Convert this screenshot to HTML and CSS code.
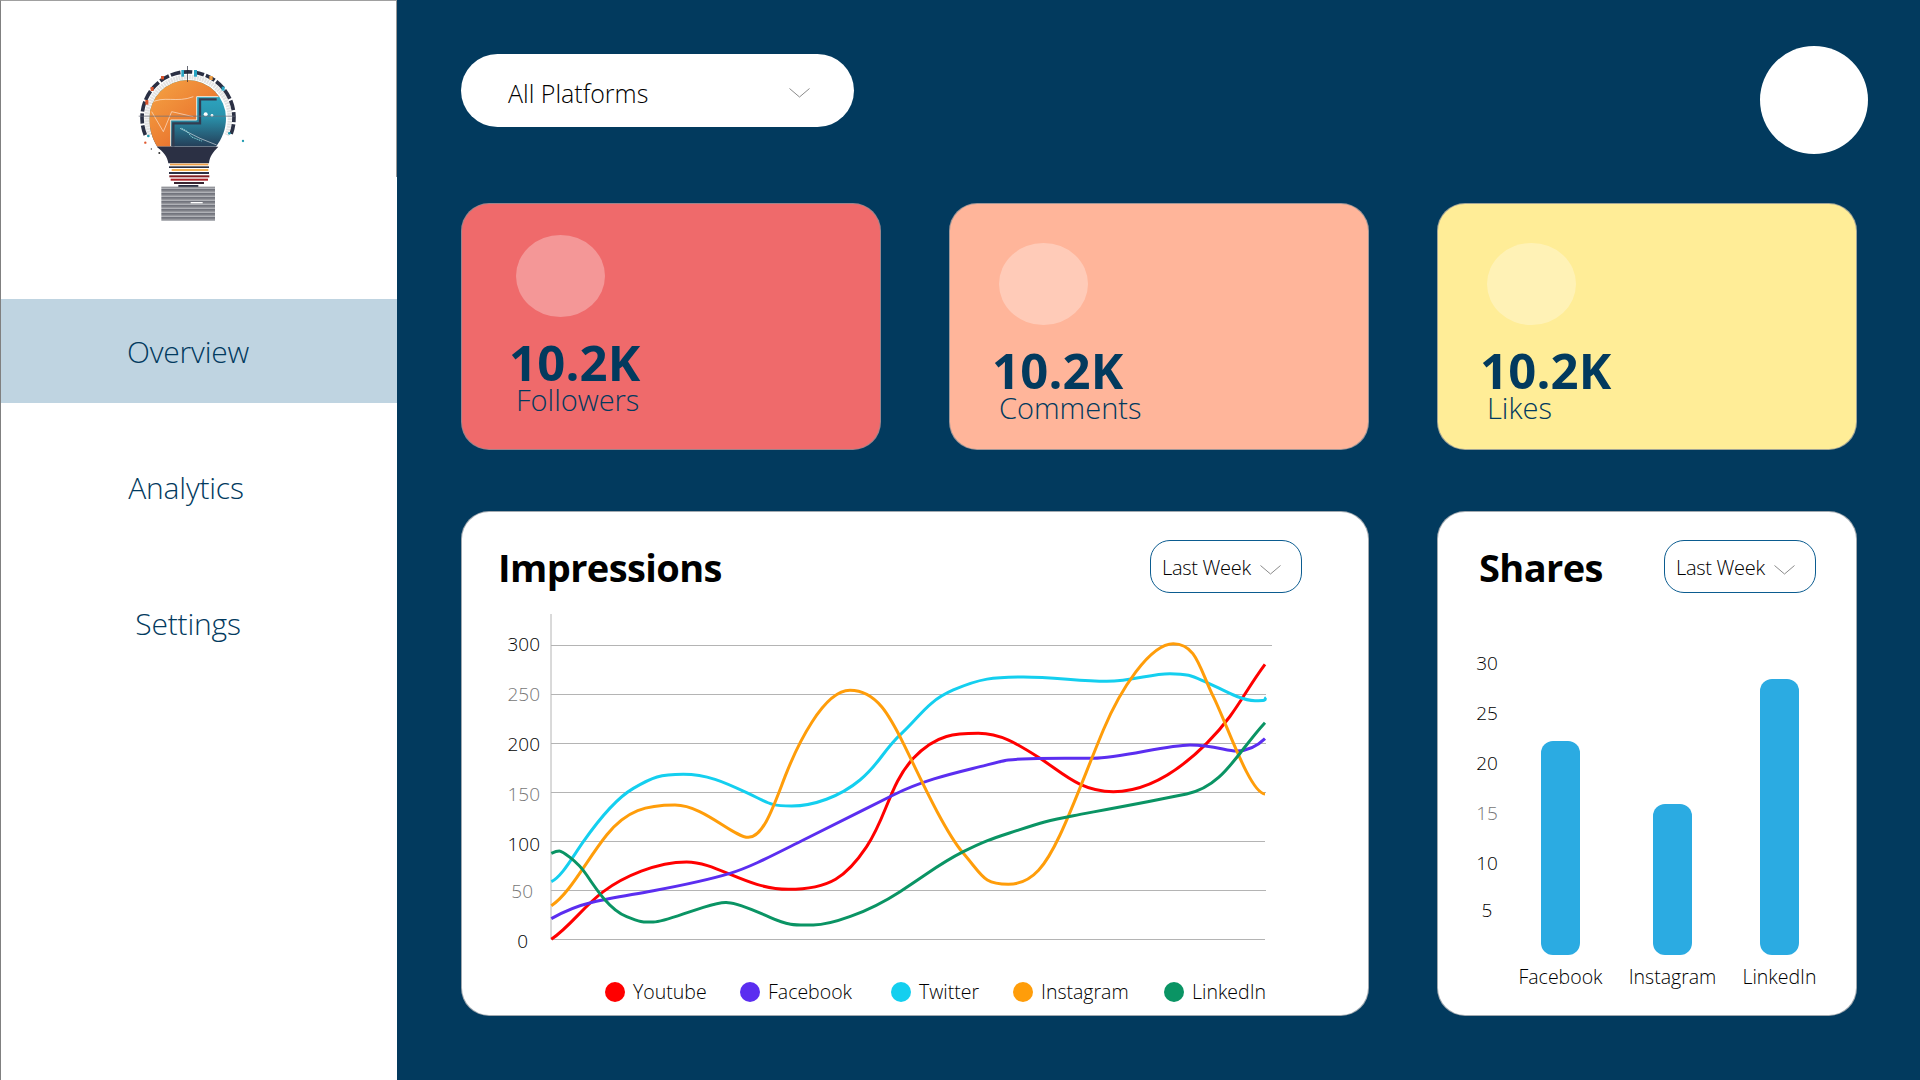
FILE: index.html
```html
<!DOCTYPE html>
<html lang="en">
<head>
<meta charset="utf-8">
<title>Social Dashboard</title>
<link rel="stylesheet" href="styles.css">
</head>
<body>
<div class="app">
  <aside class="sidebar">
    <svg class="logo" viewBox="0 0 600 600" aria-hidden="true">
      <defs>
        <linearGradient id="org" x1="0" y1="0" x2="1" y2="1"><stop offset="0" stop-color="#f6a845"/><stop offset=".55" stop-color="#ec7f33"/><stop offset="1" stop-color="#d9532b"/></linearGradient>
        <linearGradient id="teal" x1="0" y1="0" x2="0" y2="1"><stop offset="0" stop-color="#2fb6d2"/><stop offset=".55" stop-color="#2a93ad"/><stop offset="1" stop-color="#243a54"/></linearGradient>
        <pattern id="stripes" width="12" height="12" patternUnits="userSpaceOnUse"><rect width="12" height="12" fill="#cfd0d4"/><rect y="2" width="12" height="5" fill="#71737c"/><rect y="8" width="12" height="2" fill="#1d1f28"/></pattern>
        <clipPath id="globe"><path d="M148 235a115 115 0 0 1 230 0c0 32-12 62-30 85H172c-15-22-24-52-24-85z"/></clipPath>
      </defs>
      <path d="M150 285A125 125 0 1 1 380 285" fill="none" stroke="#e2e2e2" stroke-width="14" stroke-dasharray="6 2"/>
      <path d="M136 285A138 138 0 1 1 392 285" fill="none" stroke="#2b3044" stroke-width="11" stroke-dasharray="30 6"/>
      <g clip-path="url(#globe)">
        <rect x="140" y="110" width="250" height="215" fill="url(#teal)"/>
        <path d="M140 110H380V170H290V240H212V320H140z" fill="url(#org)"/>
        <path d="M350 178H300V250H220V320" fill="none" stroke="#333c50" stroke-width="7"/>
        <path d="M355 170H290V240H212V318" fill="none" stroke="#f3e9df" stroke-width="3"/>
        <path d="M150 190C190 165 230 190 280 170M155 215L190 275L215 215L280 230M240 265L300 295L350 315" fill="none" stroke="#fff" stroke-opacity=".8" stroke-width="2"/>
        <circle cx="317" cy="223" r="6" fill="#fff"/>
        <circle cx="336" cy="226" r="4" fill="#fff"/>
        <path d="M245 265l15 8l15 18l30 12" fill="none" stroke="#8fe4e4" stroke-width="3" stroke-dasharray="4 3"/>
      </g>
      <path d="M170 320H355C340 335 328 350 327 370H205C203 350 190 335 170 320Z" fill="#2b3044"/>
      <rect x="210" y="371" width="115" height="5" fill="#f0a24a"/>
      <rect x="207" y="379" width="120" height="5" fill="#2b3044"/>
      <rect x="215" y="387" width="110" height="6" fill="#f5b04d"/>
      <rect x="207" y="396" width="120" height="6" fill="#2b3044"/>
      <rect x="208" y="406" width="120" height="6" fill="#7f1d22"/>
      <rect x="212" y="416" width="112" height="6" fill="#a92026"/>
      <rect x="222" y="426" width="90" height="6" fill="#3a2430"/>
      <rect x="235" y="435" width="60" height="6" fill="#2b3044"/>
      <rect x="184" y="440" width="161" height="103" fill="url(#stripes)"/>
      <rect x="272" y="486" width="36" height="4" fill="#fff"/>
      <rect x="262" y="78" width="2" height="48" fill="#1e2230"/>
      <rect x="244" y="90" width="8" height="20" fill="#29a5c4"/>
      <rect x="282" y="90" width="9" height="20" fill="#29a5c4"/>
      <rect x="328" y="108" width="10" height="12" fill="#f0a24a"/>
      <rect x="183" y="108" width="9" height="10" fill="#d9532b"/>
      <rect x="152" y="141" width="9" height="12" fill="#d9532b"/>
      <rect x="136" y="180" width="9" height="14" fill="#d9532b"/>
      <rect x="365" y="140" width="9" height="12" fill="#29a5c4"/>
      <rect x="116" y="227" width="290" height="3" fill="#6b6f7c" opacity=".7"/>
      <circle cx="429" cy="303" r="3.5" fill="#1f9bb0"/>
      <circle cx="136" cy="308" r="3.5" fill="#e0582e"/>
      <circle cx="145" cy="288" r="4" fill="#1f9bb0"/>
      <circle cx="388" cy="280" r="4" fill="#1f9bb0"/>
      <circle cx="178" cy="339" r="3" fill="#333"/>
      <circle cx="154" cy="327" r="2" fill="#333"/>
    </svg>
    <nav class="nav">
      <a class="nav-item is-active">Overview</a>
      <a class="nav-item nav-item-analytics">Analytics</a>
      <a class="nav-item">Settings</a>
    </nav>
  </aside>

  <main class="main">
    <header class="topbar">
      <div class="platform-select">
        <span>All Platforms</span>
        <svg class="chev" width="21" height="10" viewBox="0 0 21 10"><path d="M0.5 0.5L10.5 9L20.5 0.5" fill="none" stroke="#8a8a8a" stroke-width="1"/></svg>
      </div>
      <div class="avatar"></div>
    </header>

    <section class="stats">
      <article class="stat stat-first stat-red">
        <div class="stat-dot"></div>
        <div class="stat-num">10.2K</div>
        <div class="stat-label">Followers</div>
      </article>
      <article class="stat stat-peach">
        <div class="stat-dot"></div>
        <div class="stat-num">10.2K</div>
        <div class="stat-label">Comments</div>
      </article>
      <article class="stat stat-yellow">
        <div class="stat-dot"></div>
        <div class="stat-num">10.2K</div>
        <div class="stat-label">Likes</div>
      </article>
    </section>

    <section class="panels">
      <article class="panel panel-impressions">
        <div class="panel-head">
          <h2 class="panel-title">Impressions</h2>
          <div class="range-select">
            <span>Last Week</span>
            <svg class="chev-sm" width="21" height="10" viewBox="0 0 21 10"><path d="M0.5 0.5L10.5 9L20.5 0.5" fill="none" stroke="#8a8a8a" stroke-width="1"/></svg>
          </div>
        </div>
        <svg class="line-chart" width="780" height="360" viewBox="0 0 780 360">
          <g class="grid">
            <path d="M51 14V339.5"/>
            <path d="M51 45.5H772M51 94.5H766M51 143.5H766M51 192.5H766M51 241.5H765M51 290.5H766M51 339.5H765"/>
          </g>
          <g class="ticks">
            <text x="40" y="51">300</text>
            <text class="tick-soft" x="40" y="101">250</text>
            <text x="40" y="151">200</text>
            <text class="tick-soft" x="40" y="201">150</text>
            <text x="40" y="251">100</text>
            <text class="tick-soft" x="33" y="298">50</text>
            <text x="28" y="348">0</text>
          </g>
          <g class="curves" transform="translate(-30 -90) scale(.33333)">
            <path stroke="#ff0000" d="M244 1288C300 1250 340 1190 400 1145S560 1056 650 1056S830 1138 955 1138S1130 1100 1190 1010S1260 820 1330 745S1460 670 1525 670S1640 700 1710 745S1830 845 1930 845S2120 790 2210 700S2320 550 2385 463"/>
            <path stroke="#5b2ef0" d="M244 1226C280 1205 320 1188 370 1176S480 1155 550 1142S720 1108 780 1090S900 1040 1000 990S1180 900 1270 855S1450 790 1530 770S1610 748 1680 746S1790 745 1870 745S2090 705 2160 705S2270 723 2300 723S2360 710 2385 686"/>
            <path stroke="#14cfef" d="M244 1115C275 1100 305 1045 340 995S430 870 490 835S570 793 640 793S760 815 830 848S900 888 965 888S1110 860 1170 810S1240 720 1295 670S1370 575 1450 540S1570 501 1660 501S1830 514 1910 514S2040 491 2100 491S2170 500 2210 517S2310 572 2355 572S2380 568 2388 562"/>
            <path stroke="#ff9d0a" d="M244 1187C300 1150 350 1050 410 975S530 885 615 885S790 982 835 982S910 890 945 800S1060 541 1140 541S1260 620 1300 700S1420 960 1480 1030S1540 1123 1615 1123S1730 1060 1770 975S1850 780 1900 660S2040 401 2110 401S2190 480 2230 560S2340 850 2385 852"/>
            <path stroke="#0a9464" d="M244 1030C255 1025 262 1023 268 1023S320 1050 350 1095S420 1200 470 1220S520 1236 550 1236S640 1210 700 1192S760 1178 775 1178S840 1195 900 1222S980 1245 1030 1245S1190 1210 1290 1145S1410 1060 1480 1025S1570 985 1640 962S1730 932 1810 917S2040 875 2150 852S2300 730 2385 638"/>
          </g>
        </svg>
        <ul class="legend">
          <li class="legend-item"><i class="dot dot-red"></i>Youtube</li>
          <li class="legend-item"><i class="dot dot-purple"></i>Facebook</li>
          <li class="legend-item"><i class="dot dot-cyan"></i>Twitter</li>
          <li class="legend-item"><i class="dot dot-orange"></i>Instagram</li>
          <li class="legend-item"><i class="dot dot-green"></i>LinkedIn</li>
        </ul>
      </article>

      <article class="panel panel-shares">
        <div class="panel-head">
          <h2 class="panel-title">Shares</h2>
          <div class="range-select">
            <span>Last Week</span>
            <svg class="chev-sm" width="21" height="10" viewBox="0 0 21 10"><path d="M0.5 0.5L10.5 9L20.5 0.5" fill="none" stroke="#8a8a8a" stroke-width="1"/></svg>
          </div>
        </div>
        <div class="bar-chart">
          <div class="bar-axis">
            <span>30</span><span>25</span><span>20</span><span class="tick-soft-html">15</span><span>10</span><span>5</span>
          </div>
          <div class="bar-cols">
            <div class="bar-col"><div class="bar" style="height:214px"></div><span class="bar-label">Facebook</span></div>
            <div class="bar-col"><div class="bar" style="height:151px"></div><span class="bar-label">Instagram</span></div>
            <div class="bar-col"><div class="bar" style="height:276px"></div><span class="bar-label">LinkedIn</span></div>
          </div>
        </div>
      </article>
    </section>
  </main>
</div>
</body>
</html>
```

FILE: styles.css
```css
* { box-sizing: border-box; }
html, body { margin: 0; height: 100%; }
body {
  background: #023a5e;
  font-family: "Open Sans", "Liberation Sans", sans-serif;
  color: #000;
}
.app { display: flex; width: 1920px; height: 1080px; overflow: hidden; }

/* sidebar */
.sidebar {
  position: relative;
  flex: 0 0 397px;
  background: #fff;
  border-left: 1px solid #808080;
  border-top: 1px solid #a0a0a0;
  padding-top: 39px;
}
.sidebar::after {
  content: "";
  position: absolute;
  top: 0;
  right: 0;
  width: 1px;
  height: 176px;
  background: #999;
}
.logo { display: block; width: 200px; height: 200px; margin-left: 99px; }
.nav { display: flex; flex-direction: column; gap: 32px; margin-top: 59px; }
.nav-item {
  display: flex;
  align-items: center;
  justify-content: center;
  height: 104px;
  padding: 1px 22px 0 0;
  font-size: 30px;
  font-weight: 300;
  letter-spacing: -0.2px;
  color: #023a5e;
}
.nav-item-analytics { padding-right: 26px; }
.nav-item.is-active { background: #bfd4e1; }

/* main column */
.main { flex: 1; padding: 46px 63px 0 64px; min-width: 0; }
.topbar { display: flex; justify-content: space-between; align-items: flex-start; height: 108px; margin-bottom: 49px; }
.platform-select {
  display: flex;
  align-items: center;
  justify-content: space-between;
  width: 393px;
  height: 73px;
  margin-top: 8px;
  padding: 4px 44px 0 47px;
  background: #fff;
  border-radius: 37px;
  font-size: 25px;
  font-weight: 300;
  color: #000;
}
.avatar { width: 108px; height: 108px; margin-right: -11px; border-radius: 50%; background: #fff; }

/* stat cards */
.stats { display: grid; grid-template-columns: repeat(3, 1fr); gap: 68px; margin-bottom: 61px; }
.stat {
  height: 247px;
  padding: 39px 0 0 49px;
  border: 1px solid rgba(130, 140, 150, .75);
  border-radius: 28px;
  color: #023a5e;
}
.stat-first { padding: 31px 0 0 54px; }
.stat-red { background: #ef6a6b; }
.stat-peach { background: #ffb59a; }
.stat-yellow { background: #ffed97; }
.stat-dot { width: 89px; height: 82px; border-radius: 50%; background: rgba(255, 255, 255, .3); }
.stat-num { margin: 24px 0 0 -7px; font-size: 49px; font-weight: 700; line-height: 42px; letter-spacing: .2px; }
.stat-label { margin: 1px 0 0 0; font-size: 29px; line-height: 32px; font-weight: 300; }

/* panels */
.panels { display: grid; grid-template-columns: repeat(3, 1fr); gap: 68px; }
.panel {
  height: 505px;
  padding-top: 28px;
  background: #fff;
  border: 1px solid rgba(130, 140, 150, .75);
  border-radius: 28px;
}
.panel-impressions { grid-column: span 2; padding-left: 38px; padding-right: 66px; }
.panel-shares { padding-left: 29px; padding-right: 40px; }
.panel-head { display: flex; justify-content: space-between; align-items: center; height: 52px; }
.panel-title { margin: 2px 0 0 -2px; font-size: 38px; font-weight: 700; letter-spacing: -0.6px; color: #000; }
.panel-shares .panel-title { margin-left: 12px; }
.range-select {
  display: flex;
  align-items: center;
  justify-content: space-between;
  width: 152px;
  height: 53px;
  padding: 2px 20px 0 11px;
  border: 1px solid #0b5c90;
  border-radius: 20px;
  font-size: 20px;
  font-weight: 300;
  letter-spacing: -0.3px;
  color: #000;
}
.chev-sm { margin-top: 6px; flex: none; }

/* line chart */
.line-chart { display: block; margin-top: 8px; }
.grid path { fill: none; stroke: #b4b4b4; stroke-width: 1; }
.ticks text { font-size: 19px; font-weight: 300; fill: #000; text-anchor: end; }
.ticks .tick-soft { fill: #777; }
.curves path { fill: none; stroke-width: 9; }
.legend {
  display: grid;
  grid-template-columns: 135px 151px 122px 151px auto;
  margin: 19px 0 0 105px;
  padding: 0;
  list-style: none;
}
.legend-item { display: flex; align-items: center; gap: 8px; font-size: 19.5px; font-weight: 300; color: #000; line-height: 26px; white-space: nowrap; }
.dot { flex: none; width: 20px; height: 20px; border-radius: 50%; }
.dot-red { background: #ff0000; }
.dot-purple { background: #5b2ef0; }
.dot-cyan { background: #14cfef; }
.dot-orange { background: #ff9d0a; }
.dot-green { background: #0a9464; }

/* bar chart */
.bar-chart { display: flex; margin-top: 46px; }
.bar-axis { flex: 0 0 40px; margin-right: 12px; display: flex; flex-direction: column; align-items: center; font-size: 19px; font-weight: 300; line-height: 50px; color: #000; }
.bar-axis span:last-child { margin-top: -3px; }
.tick-soft-html { color: #777; }
.bar-cols { display: grid; grid-template-columns: 83px 87px 73px; column-gap: 27px; height: 357px; }
.bar-col { display: flex; flex-direction: column; justify-content: flex-end; align-items: center; }
.bar { width: 39px; background: #2babe2; border-radius: 12px; }
.bar-label { height: 40px; padding-top: 2px; font-size: 19.5px; font-weight: 300; line-height: 40px; color: #000; white-space: nowrap; }
```
